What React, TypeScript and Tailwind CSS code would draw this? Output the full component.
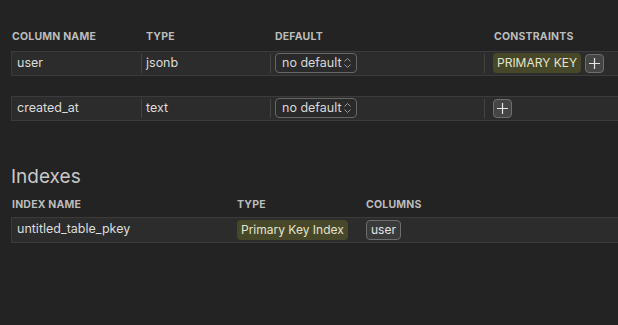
import React from 'react';

const font = { fontFamily: 'Inter, "Noto Sans", sans-serif' };

const Plus: React.FC = () => (
  <button className="flex h-[19px] w-[19px] items-center justify-center rounded-[4px] border border-[#6e6e6e] bg-[#454545]">
    <svg width="13" height="13" viewBox="0 0 13 13" fill="none" stroke="#e6e6e6" strokeWidth="1.2">
      <path d="M6.5 1v11M1 6.5h11" />
    </svg>
  </button>
);

const DefaultSelect: React.FC = () => (
  <div className="flex h-[20px] w-[82px] items-center justify-between rounded-[4px] border border-[#666] bg-[#2a2a2a] pl-[6px] pr-[4px] text-[12.5px] text-[#d8d8d8]">
    <span>no default</span>
    <svg width="9" height="12" viewBox="0 0 9 12" fill="none" stroke="#9a9a9a" strokeWidth="1">
      <path d="M1.5 4.5L4.5 1.5L7.5 4.5M1.5 7.5L4.5 10.5L7.5 7.5" />
    </svg>
  </div>
);

type Col = { name: string; type: string; pk?: boolean };

const cols: Col[] = [
  { name: 'user', type: 'jsonb', pk: true },
  { name: 'created_at', type: 'text' },
];

export default function App() {
  return (
    <div className="h-[325px] w-[618px] overflow-hidden bg-[#232323] pl-[11px] pt-[29px]" style={font}>
      {/* columns table */}
      <div className="flex text-[10.5px] font-bold tracking-[0.2px] text-[#bcbcbc]">
        <div className="w-[130px] pl-[1px]">COLUMN NAME</div>
        <div className="w-[129px] pl-[5px]">TYPE</div>
        <div className="w-[214px] pl-[5px]">DEFAULT</div>
        <div className="pl-[10px]">CONSTRAINTS</div>
      </div>

      <div className="mt-[6px] flex flex-col gap-[20px]">
        {cols.map((c) => (
          <div key={c.name} className="flex h-[25px] items-center border border-r-0 border-[#3b3b3b] bg-[#2c2c2c] text-[12.5px] text-[#dcdcdc]">
            <div className="w-[129px] pl-[5px]">{c.name}</div>
            <div className="h-[19px] w-px bg-[#444]" />
            <div className="w-[128px] pl-[4px]">{c.type}</div>
            <div className="h-[19px] w-px bg-[#444]" />
            <div className="w-[213px] pl-[4px]">
              <DefaultSelect />
            </div>
            <div className="h-[19px] w-px bg-[#444]" />
            <div className="flex items-center gap-[4px] pl-[8px]">
              {c.pk && (
                <span className="flex h-[20px] items-center rounded-[4px] bg-[#47472a] px-[4px] text-[12px] text-[#e4e4cc]">
                  PRIMARY KEY
                </span>
              )}
              <Plus />
            </div>
          </div>
        ))}
      </div>

      {/* indexes */}
      <h2 className="mt-[44px] text-[19px] leading-[24px] text-[#c9c9c9]">Indexes</h2>
      <div className="mt-[8px] flex text-[10.5px] font-bold tracking-[0.2px] text-[#bcbcbc]">
        <div className="w-[226px] pl-[1px]">INDEX NAME</div>
        <div className="w-[129px]">TYPE</div>
        <div>COLUMNS</div>
      </div>
      <div className="mt-[4px] flex h-[26px] items-center border border-r-0 border-[#3b3b3b] bg-[#2c2c2c] text-[12.5px] text-[#dcdcdc]">
        <div className="w-[225px] pl-[5px]">untitled_table_pkey</div>
        <div className="w-[129px]">
          <span className="inline-flex h-[20px] items-center rounded-[4px] bg-[#47472a] px-[4px] text-[12px] text-[#e4e4cc]">
            Primary Key Index
          </span>
        </div>
        <div>
          <span className="inline-flex h-[20px] items-center rounded-[4px] border border-[#6e6e6e] bg-[#3a3a3a] px-[4px] text-[12px] text-[#e4e4e4]">
            user
          </span>
        </div>
      </div>
    </div>
  );
}
